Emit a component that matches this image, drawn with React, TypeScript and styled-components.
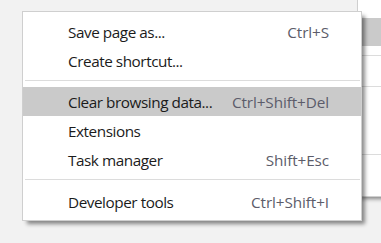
import styled, { createGlobalStyle } from "styled-components";

const GlobalStyle = createGlobalStyle`
  html, body {
    margin: 0;
    padding: 0;
    background: #f2f2f2;
  }
  body {
    font-family: "Open Sans", "Noto Sans", "DejaVu Sans", sans-serif;
  }
`;

const Desktop = styled.div`
  position: relative;
  width: 381px;
  height: 243px;
  overflow: hidden;
  background: #f2f2f2;
`;

// the parent menu, mostly off screen to the right
const ParentMenu = styled.div`
  position: absolute;
  left: 357px;
  top: -1px;
  width: 120px;
  display: flex;
  flex-direction: column;
  background: #ffffff;
  border: 1px solid #cfcfcf;
  box-shadow: 3px 3px 4px -1px rgba(0, 0, 0, 0.45);
`;

const ParentRow = styled.div<{ $h: number; $active?: boolean }>`
  height: ${(p) => p.$h}px;
  margin-left: 4px;
  background: ${(p) => (p.$active ? "#cacaca" : "transparent")};
`;

const ParentSep = styled.div`
  height: 1px;
  margin-left: 4px;
  background: #dcdcdc;
`;

const SubMenu = styled.div`
  position: absolute;
  left: 22px;
  top: 11px;
  width: 338px;
  padding: 5px 0 4px;
  display: flex;
  flex-direction: column;
  background: #ffffff;
  border: 1px solid #cfcfcf;
  box-shadow: 4px 4px 4px -1px rgba(0, 0, 0, 0.45);
`;

const Item = styled.div<{ $active?: boolean }>`
  height: 29px;
  display: flex;
  align-items: center;
  justify-content: space-between;
  padding: 0 32px 0 45px;
  background: ${(p) => (p.$active ? "#cacaca" : "transparent")};
  font-size: 15.3px;
  letter-spacing: -0.45px;
  color: #1b1b1b;
`;

const Shortcut = styled.span`
  color: #5c5c6a;
  letter-spacing: -0.1px;
`;

const Separator = styled.div<{ $below: number }>`
  height: 1px;
  margin: 5px 1px ${(p) => p.$below}px 2px;
  background: #dcdcdc;
`;

type Entry =
  | { label: string; shortcut?: string; active?: boolean }
  | { sep: number };

const entries: Entry[] = [
  { label: "Save page as...", shortcut: "Ctrl+S" },
  { label: "Create shortcut..." },
  { sep: 6 },
  { label: "Clear browsing data...", shortcut: "Ctrl+Shift+Del", active: true },
  { label: "Extensions" },
  { label: "Task manager", shortcut: "Shift+Esc" },
  { sep: 7 },
  { label: "Developer tools", shortcut: "Ctrl+Shift+I" },
];

export default function App() {
  return (
    <Desktop>
      <GlobalStyle />
      <ParentMenu>
        <ParentRow $h={18} />
        <ParentRow $h={28} $active />
        <ParentRow $h={9} />
        <ParentSep />
        <ParentRow $h={30} />
        <ParentSep />
        <ParentRow $h={67} />
        <ParentSep />
        <ParentRow $h={41} />
      </ParentMenu>
      <SubMenu>
        {entries.map((e, i) =>
          "sep" in e ? (
            <Separator key={i} $below={e.sep} />
          ) : (
            <Item key={i} $active={e.active}>
              <span>{e.label}</span>
              {e.shortcut ? <Shortcut>{e.shortcut}</Shortcut> : null}
            </Item>
          )
        )}
      </SubMenu>
    </Desktop>
  );
}
